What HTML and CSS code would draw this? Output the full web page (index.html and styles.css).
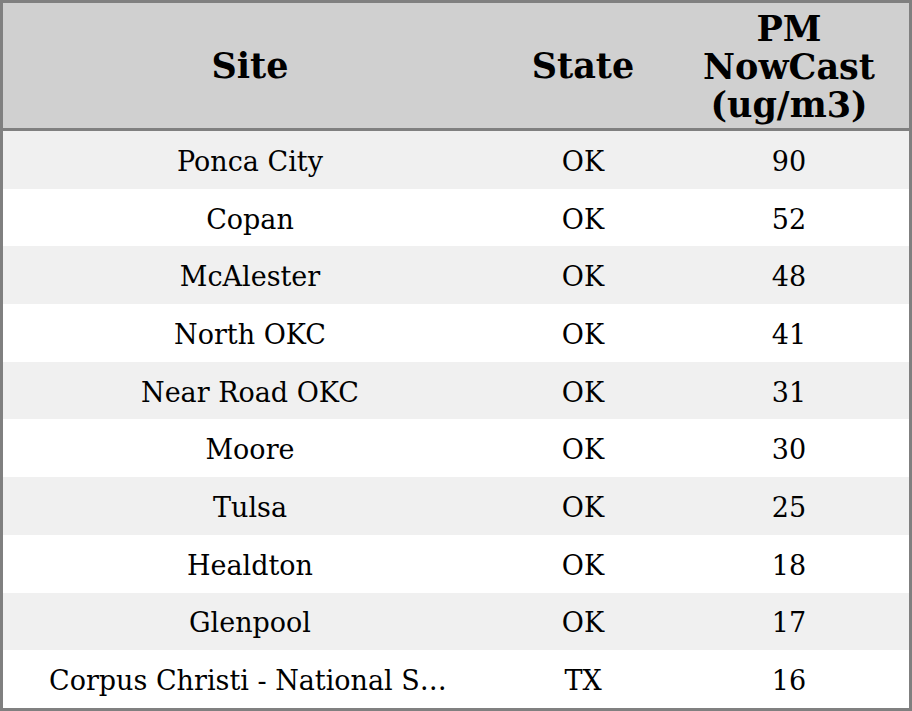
FILE: index.html
```html
<!DOCTYPE html>
<html>
<head>
<meta charset="utf-8">
<link rel="stylesheet" href="styles.css">
</head>
<body>
<div class="frame">
<table class="aq">
  <colgroup>
    <col class="c-site">
    <col class="c-state">
    <col class="c-pm">
  </colgroup>
  <thead>
    <tr><th>Site</th><th>State</th><th class="pm">PM<br>NowCast<br>(ug/m3)</th></tr>
  </thead>
  <tbody>
    <tr><td>Ponca City</td><td>OK</td><td>90</td></tr>
    <tr><td>Copan</td><td>OK</td><td>52</td></tr>
    <tr><td>McAlester</td><td>OK</td><td>48</td></tr>
    <tr><td>North OKC</td><td>OK</td><td>41</td></tr>
    <tr><td>Near Road OKC</td><td>OK</td><td>31</td></tr>
    <tr><td>Moore</td><td>OK</td><td>30</td></tr>
    <tr><td>Tulsa</td><td>OK</td><td>25</td></tr>
    <tr><td>Healdton</td><td>OK</td><td>18</td></tr>
    <tr><td>Glenpool</td><td>OK</td><td>17</td></tr>
    <tr><td class="clip">Corpus Christi - National Seashore</td><td>TX</td><td>16</td></tr>
  </tbody>
</table>
</div>
</body>
</html>
```
FILE: styles.css
```css
html, body {
  margin: 0;
  padding: 0;
  background: #ffffff;
}
.frame {
  width: 912px;
  height: 711px;
  box-sizing: border-box;
  border: 3px solid #808080;
  overflow: hidden;
}
.aq {
  width: 100%;
  height: 100%;
  border-collapse: separate;
  border-spacing: 0;
  table-layout: fixed;
  font-family: "DejaVu Serif", serif;
  color: #000;
}
.c-site { width: 494px; }
.c-state { width: 172px; }
.c-pm { width: 240px; }
.aq thead th {
  background: #d0d0d0;
  font-weight: bold;
  font-size: 35px;
  line-height: 38px;
  height: 128px;
  box-sizing: border-box;
  padding: 0;
  text-align: center;
  vertical-align: middle;
  border-bottom: 3px solid #808080;
}
.aq thead th.pm {
  padding-top: 3px;
}
.aq tbody td {
  font-size: 27px;
  padding: 3px 0 0;
  text-align: center;
  vertical-align: middle;
}
.aq tbody tr:nth-child(odd) td {
  background: #f0f0f0;
}
.aq tbody td.clip {
  padding-left: 46px;
  padding-right: 46px;
  white-space: nowrap;
  overflow: hidden;
  text-overflow: ellipsis;
}
```
